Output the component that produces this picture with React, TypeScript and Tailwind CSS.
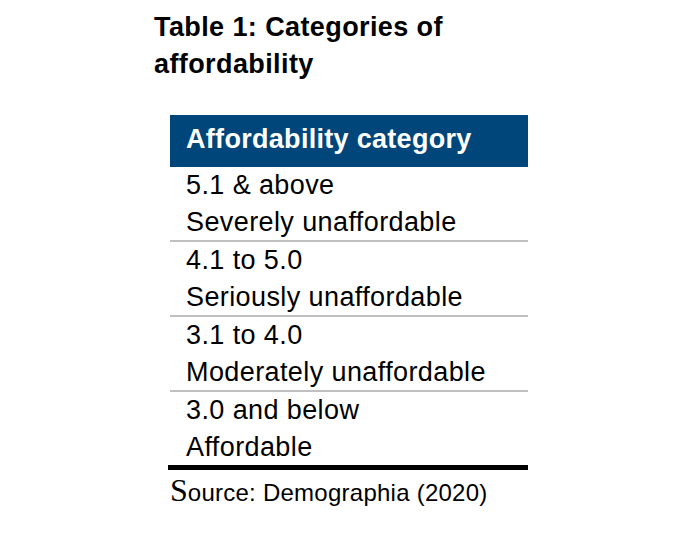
import React from 'react';

type Category = { range: string; label: string };

const categories: Category[] = [
  { range: '5.1 & above', label: 'Severely unaffordable' },
  { range: '4.1 to 5.0', label: 'Seriously unaffordable' },
  { range: '3.1 to 4.0', label: 'Moderately unaffordable' },
  { range: '3.0 and below', label: 'Affordable' },
];

export default function App() {
  return (
    <div className="min-h-screen bg-white text-black font-['Liberation_Sans',Arial,sans-serif]">
      <div className="mx-auto w-[388px]">
        {/* Title */}
        <h1 className="pt-[9px] text-[27px] font-bold leading-[37px] tracking-[0.4px]">
          Table 1: Categories of
          <br />
          affordability
        </h1>

        {/* Table */}
        <div className="mt-[32px] ml-[16px] w-[358px]">
          <div className="h-[52px] bg-[#00467a] pl-[16px] text-[27px] font-bold leading-[48px] tracking-[0.3px] text-white">
            Affordability category
          </div>
          {categories.map((c, idx) => (
            <div
              key={c.range}
              className={
                idx < categories.length - 1
                  ? 'border-b-2 border-[#c0c0c0] pl-[16px] text-[27px] leading-[36.5px] tracking-[0.4px]'
                  : 'pl-[16px] text-[27px] leading-[36.5px] tracking-[0.4px]'
              }
            >
              <div>{c.range}</div>
              <div>{c.label}</div>
            </div>
          ))}
        </div>
        <div className="ml-[14px] h-[5px] w-[360px] bg-black" />

        {/* Source */}
        <p className="ml-[16px] flex items-baseline pt-[3px] text-[24px] leading-[34px] tracking-[0.25px]">
          <span className="font-['Liberation_Serif','Times_New_Roman',serif] text-[32px] tracking-normal">S</span>
          <span>ource: Demographia (2020)</span>
        </p>
      </div>
    </div>
  );
}
